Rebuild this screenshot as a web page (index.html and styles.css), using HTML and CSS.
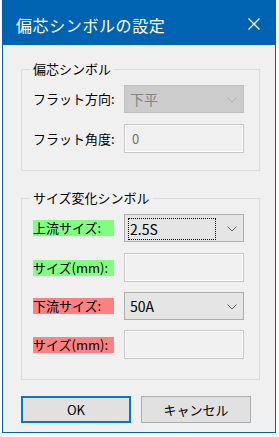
FILE: index.html
```html
<!DOCTYPE html>
<html lang="ja">
<head>
<meta charset="utf-8">
<title>偏芯シンボルの設定</title>
<link rel="stylesheet" href="styles.css">
</head>
<body>
<div class="window">
  <div class="titlebar">
    <span class="title">偏芯シンボルの設定</span>
    <svg class="close" width="12" height="12" viewBox="0 0 12 12"><path d="M0.5 0.5 L11.5 11.5 M11.5 0.5 L0.5 11.5" stroke="#fff" stroke-width="1.3" fill="none"/></svg>
  </div>
  <div class="content">
    <fieldset class="group g1">
      <legend>偏芯シンボル</legend>
      <div class="row">
        <span class="label">フラット方向:</span>
        <div class="combo disabled">
          <span class="val">下平</span>
          <svg class="chev" width="10" height="6" viewBox="0 0 10 6"><path d="M0.5 0.5 L5 5 L9.5 0.5" stroke="#b4b4b4" stroke-width="1" fill="none"/></svg>
        </div>
      </div>
      <div class="row r2">
        <span class="label">フラット角度:</span>
        <div class="textbox"><span class="val dim">0</span></div>
      </div>
    </fieldset>

    <fieldset class="group g2">
      <legend>サイズ変化シンボル</legend>
      <div class="row">
        <span class="label"><span class="hl green">上流サイズ:</span></span>
        <div class="combo">
          <span class="focus">2.5S</span>
          <svg class="chev" width="10" height="6" viewBox="0 0 10 6"><path d="M0.5 0.5 L5 5 L9.5 0.5" stroke="#606060" stroke-width="1" fill="none"/></svg>
        </div>
      </div>
      <div class="row r2">
        <span class="label"><span class="hl green">サイズ(mm):</span></span>
        <div class="textbox"></div>
      </div>
      <div class="row r3">
        <span class="label"><span class="hl red">下流サイズ:</span></span>
        <div class="combo">
          <span class="val">50A</span>
          <svg class="chev" width="10" height="6" viewBox="0 0 10 6"><path d="M0.5 0.5 L5 5 L9.5 0.5" stroke="#606060" stroke-width="1" fill="none"/></svg>
        </div>
      </div>
      <div class="row r3">
        <span class="label"><span class="hl red">サイズ(mm):</span></span>
        <div class="textbox"></div>
      </div>
    </fieldset>

    <div class="buttons">
      <button class="btn default">OK</button>
      <button class="btn">キャンセル</button>
    </div>
  </div>
</div>
</body>
</html>
```
FILE: styles.css
```css
html, body {
  margin: 0;
  padding: 0;
  background: #ffffff;
}
body {
  font-family: "Noto Sans CJK JP", "Noto Sans", sans-serif;
  font-size: 13px;
  color: #000;
}
.window {
  margin-left: 2px;
  width: 274px;
  height: 433px;
  box-sizing: border-box;
  border: 1px solid #0063b1;
  border-top: none;
  background: #f0f0f0;
  display: flex;
  flex-direction: column;
}
.titlebar {
  height: 45px;
  flex: none;
  box-sizing: border-box;
  background: #0063b1;
  color: #fff;
  display: flex;
  align-items: center;
  padding: 4px 0 0 13px;
}
.title {
  font-size: 16px;
  letter-spacing: 0.6px;
  line-height: 20px;
}
.close {
  margin-left: auto;
  margin-right: 15px;
  margin-top: -2px;
}
.content {
  padding: 16px 0 0 18px;
  display: flex;
  flex-direction: column;
}
.group {
  margin: 0;
  width: 239px;
  box-sizing: border-box;
  border: 1px solid #dcdcdc;
  padding: 8px 15px 17px 11px;
  min-width: 0;
}
.group legend {
  padding: 0 3px;
  margin-left: -3px;
  line-height: 16px;
  font-size: 13px;
}
.g2 {
  margin-top: 19px;
  padding-bottom: 20px;
}
.row {
  display: flex;
  align-items: center;
}
.r2 { margin-top: 11px; }
.r3 { margin-top: 10px; }
.label {
  width: 91px;
  flex: none;
  line-height: 16px;
}
.hl {
  display: inline-block;
  width: 81px;
  height: 16px;
  line-height: 16px;
}
.green { background: #80ff80; }
.red { background: #ff8080; }
.combo {
  width: 120px;
  height: 28px;
  box-sizing: border-box;
  border: 1px solid #adadad;
  background: #e5e5e5;
  display: flex;
  align-items: center;
  padding: 0 6px 0 3px;
}
.combo.disabled {
  background: #cccccc;
  border-color: #bfbfbf;
  color: #838383;
}
.combo .val {
  padding-left: 2px;
  font-size: 14px;
}
.combo .chev {
  margin-left: auto;
  margin-top: 1px;
}
.focus {
  width: 88px;
  height: 22px;
  box-sizing: border-box;
  border: 1px dotted #000;
  display: flex;
  align-items: center;
  padding-left: 1px;
  font-size: 14px;
  margin-top: 1px;
}
.textbox {
  width: 120px;
  height: 29px;
  box-sizing: border-box;
  border: 1px solid #c8c8c8;
  box-shadow: inset 0 0 0 1px #ffffff;
  background: #f0f0f0;
  display: flex;
  align-items: center;
  padding-left: 7px;
}
.dim {
  color: #6d6d6d;
  font-size: 13px;
}
.buttons {
  margin-top: 16px;
  display: flex;
  gap: 10px;
}
.btn {
  width: 110px;
  height: 27px;
  box-sizing: border-box;
  border: 1px solid #adadad;
  background: #e1e1e1;
  font-family: "Noto Sans CJK JP", "Noto Sans", sans-serif;
  font-size: 13px;
  color: #000;
  padding: 0;
  margin: 0;
}
.btn.default {
  border: 2px solid #0078d7;
}
```
